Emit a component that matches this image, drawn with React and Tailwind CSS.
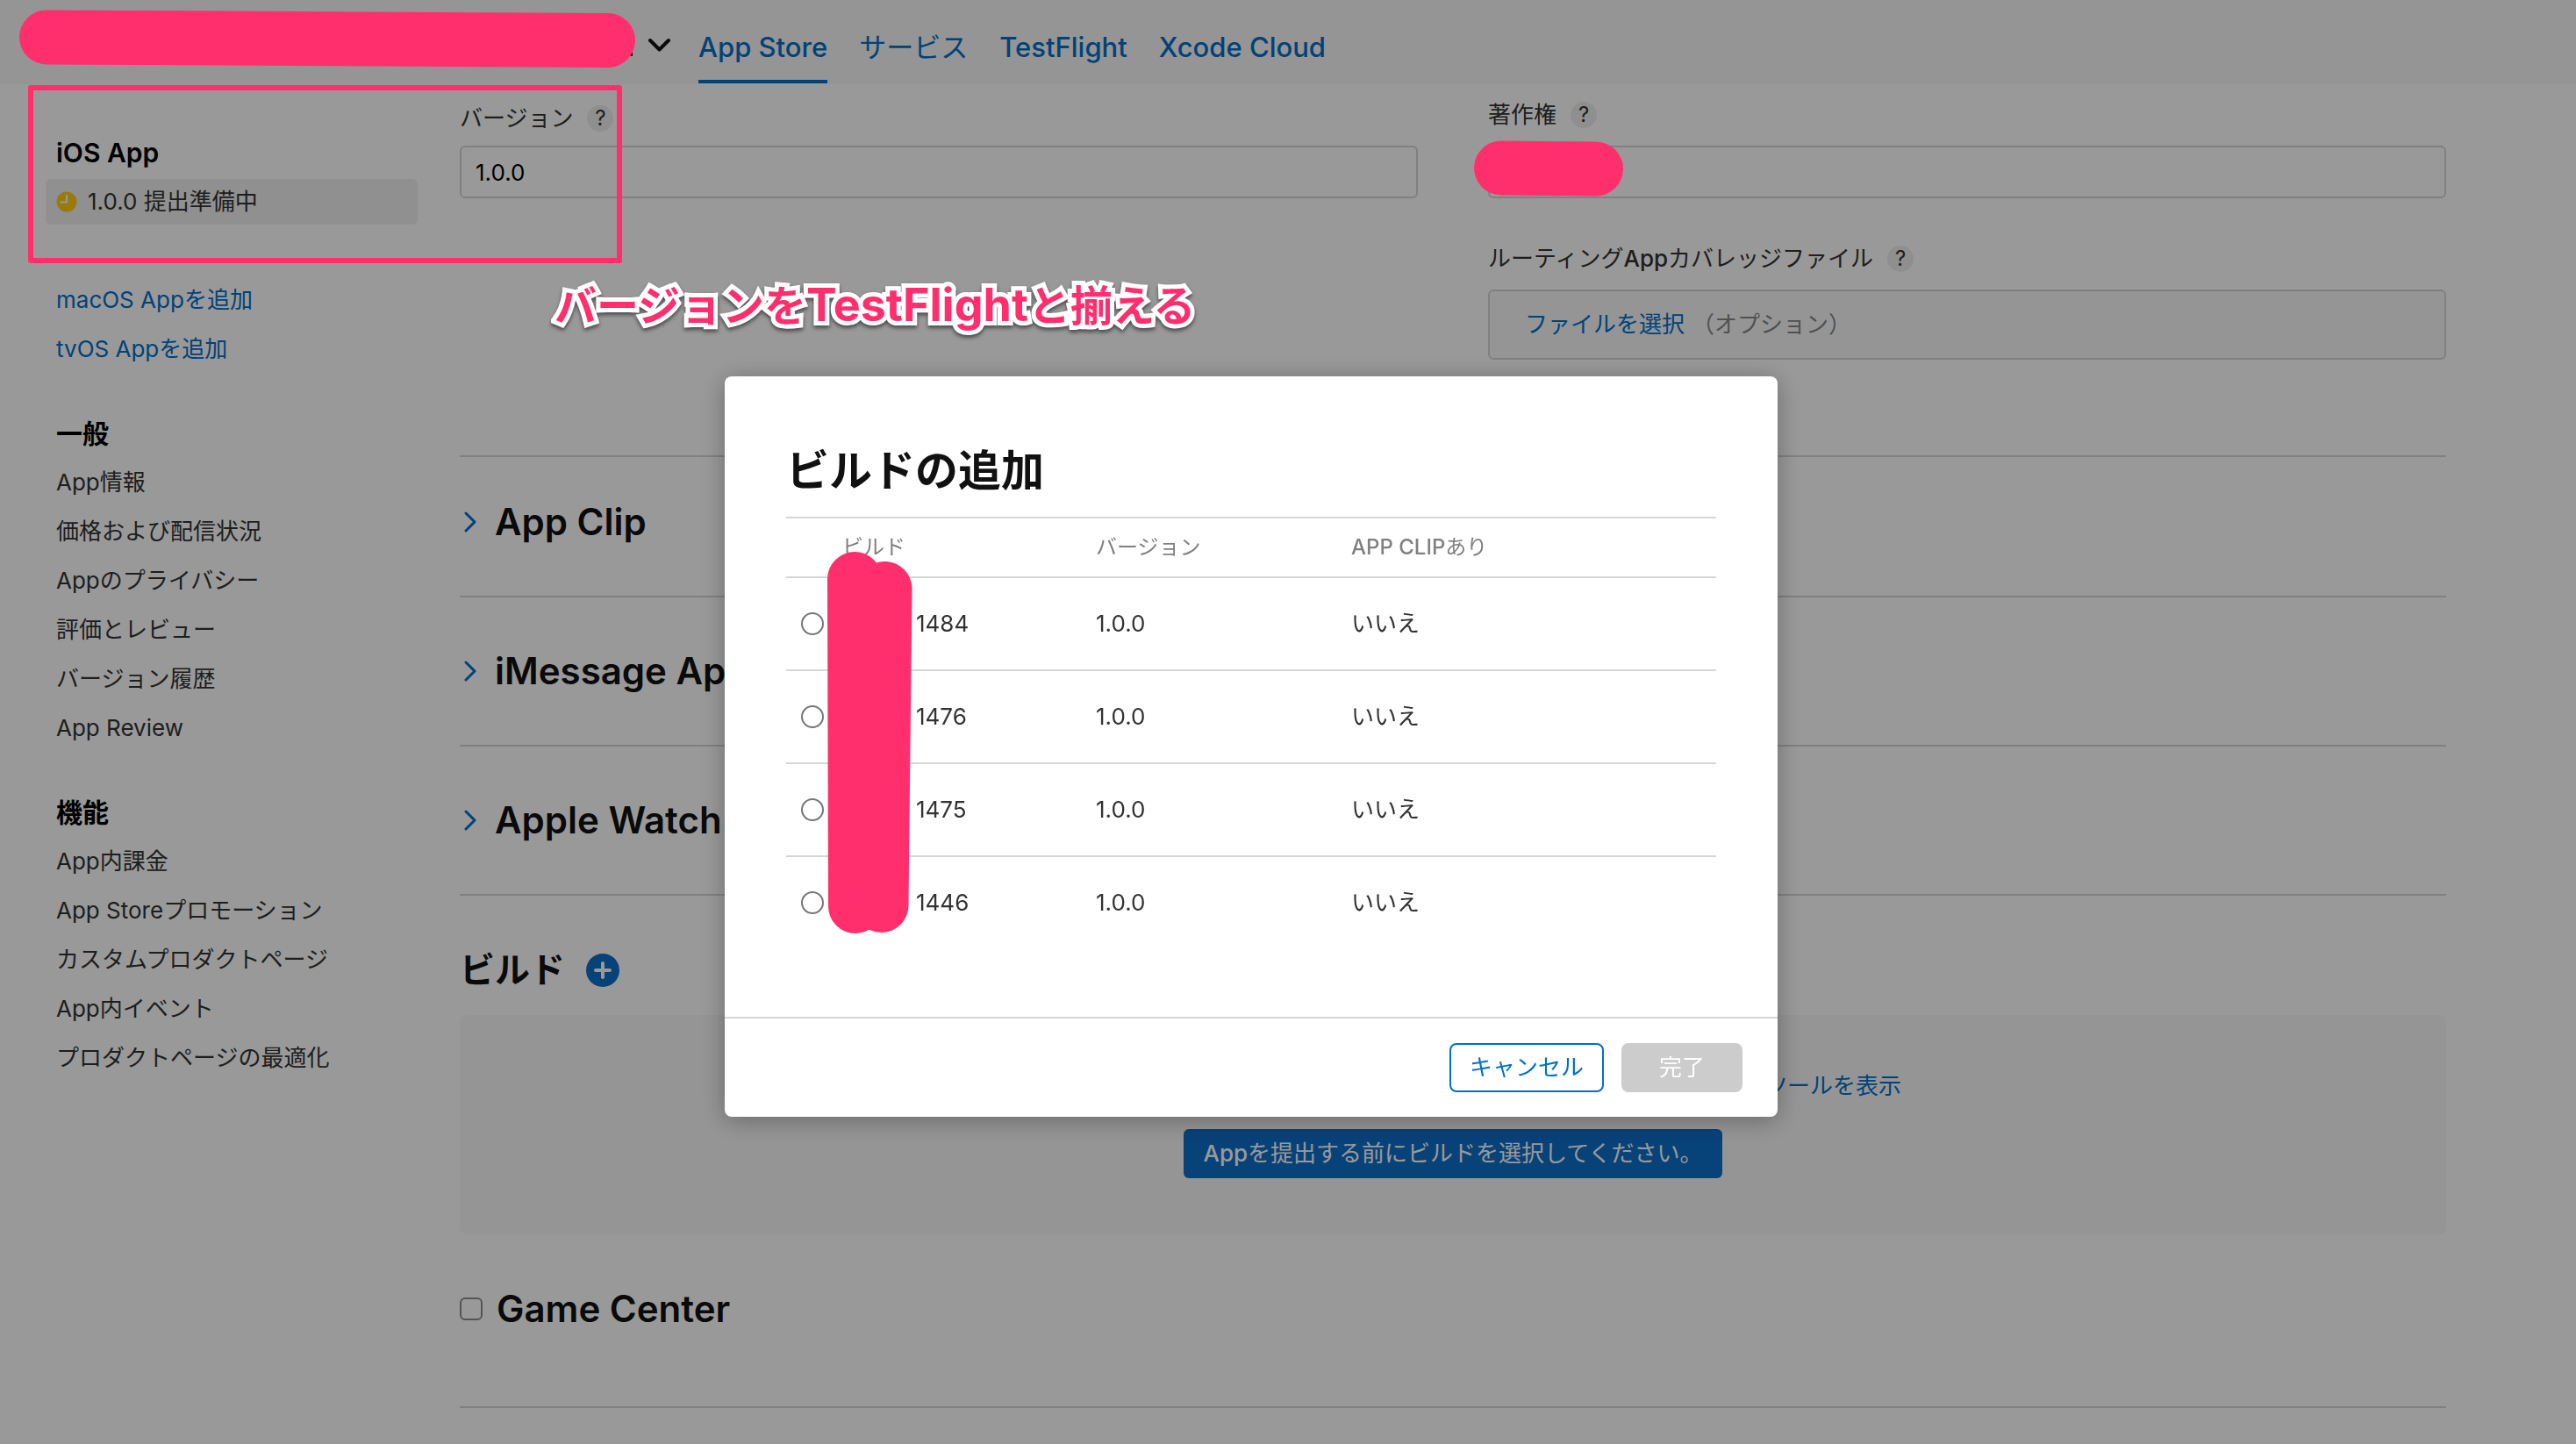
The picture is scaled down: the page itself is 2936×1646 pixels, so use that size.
import React from 'react';

const tabs = ['TestFlight', 'Xcode Cloud'];

const generalLinks = [
  'App情報',
  '価格および配信状況',
  'Appのプライバシー',
  '評価とレビュー',
  'バージョン履歴',
  'App Review',
];

const featureLinks = [
  'App内課金',
  'App Storeプロモーション',
  'カスタムプロダクトページ',
  'App内イベント',
  'プロダクトページの最適化',
];

const builds = ['1484', '1476', '1475', '1446'];

const Header = () => {
  return (
    <header className="flex h-24 bg-[#f8f8f8] pl-[736px] text-[31px] leading-10 font-medium text-[#0070c9]">
      <button type="button" aria-label="Appを切り替える" className="mr-7 pt-1">
        <svg className="h-8 w-8" viewBox="0 0 32 32" fill="none" stroke="#111" strokeWidth="4" strokeLinecap="round" strokeLinejoin="round">
          <path d="M5 12l10.500 10.500L26 12" />
        </svg>
      </button>
      <nav className="flex h-[95px] gap-9">
        <a href="#app-store" className="flex items-center border-b-4 border-[#0070c9] pt-4">
          App Store
        </a>
        <a href="#services" className="flex items-center border-b-4 border-transparent pt-4 font-normal">
          サービス
        </a>
        {tabs.map((tab) => (
          <a key={tab} href="#tab" className="flex items-center border-b-4 border-transparent pt-4">
            {tab}
          </a>
        ))}
      </nav>
    </header>
  );
};

const SideSection = ({ title, links }) => {
  return (
    <section className="mt-10">
      <h2 className="flex h-14 items-center text-[30px] font-semibold text-black">{title}</h2>
      <ul>
        {links.map((link) => (
          <li key={link} className="flex h-14 items-center">
            <a href="#section">{link}</a>
          </li>
        ))}
      </ul>
    </section>
  );
};

const Sidebar = () => {
  return (
    <aside className="w-[476px] shrink-0 pt-[50px] pl-16">
      <h2 className="flex h-14 items-center text-[30px] font-semibold text-black">iOS App</h2>
      <div className="-ml-3 flex h-14 items-center">
        <a href="#version" className="flex h-[52px] w-full items-center gap-3 rounded-md bg-[#f0f0f0] pl-3">
          <svg className="h-6 w-6" viewBox="0 0 24 24" fill="none">
            <circle cx="12" cy="12" r="11.500" fill="#ffcc16" />
            <path d="M12 5v7.500H5.500" stroke="#fff" strokeWidth="2" strokeLinecap="round" strokeLinejoin="round" />
          </svg>
          1.0.0 提出準備中
        </a>
      </div>
      <ul className="mt-14 text-[#0070c9]">
        <li className="flex h-14 items-center">
          <a href="#macos">macOS Appを追加</a>
        </li>
        <li className="flex h-14 items-center">
          <a href="#tvos">tvOS Appを追加</a>
        </li>
      </ul>
      <SideSection title="一般" links={generalLinks} />
      <SideSection title="機能" links={featureLinks} />
    </aside>
  );
};

const HelpButton = () => {
  return (
    <button type="button" aria-label="ヘルプ" className="flex h-[30px] w-[30px] items-center justify-center rounded-full bg-[#eeeeee] text-2xl">
      ?
    </button>
  );
};

const Disclosure = ({ title }) => {
  return (
    <button type="button" className="flex items-center gap-5 text-[42px] font-semibold whitespace-nowrap text-[#111111]">
      <svg className="h-6 w-5" viewBox="0 0 20 24" fill="none" stroke="#0070c9" strokeWidth="3" strokeLinecap="round" strokeLinejoin="round">
        <path d="M7 2l10 10L7 22" />
      </svg>
      {title}
    </button>
  );
};

const VersionForm = () => {
  return (
    <div className="grid grid-cols-2 gap-20">
      <div className="pt-6">
        <div className="mb-4 flex h-[30px] items-center gap-4">
          <label htmlFor="version">バージョン</label>
          <HelpButton />
        </div>
        <input
          id="version"
          type="text"
          defaultValue="1.0.0"
          className="h-15 w-full rounded-md border-2 border-[#d6d6d6] bg-white px-4 text-black"
        />
      </div>
      <div className="pt-5">
        <div className="mb-5 flex h-[30px] items-center gap-4">
          <label htmlFor="copyright">著作権</label>
          <HelpButton />
        </div>
        <input id="copyright" type="text" className="h-15 w-full rounded-md border-2 border-[#d6d6d6] bg-white px-4 text-black" />
        <div className="mt-[54px] mb-5 flex h-[30px] items-center gap-4">
          <span>
            ルーティング<span className="font-medium">App</span>カバレッジファイル
          </span>
          <HelpButton />
        </div>
        <div className="flex h-20 items-center gap-2 rounded-md border-2 border-[#d6d6d6] bg-[#f8f8f8] px-10">
          <button type="button" className="text-[#0070c9]">ファイルを選択</button>
          <span className="text-[#888888]">（オプション）</span>
        </div>
      </div>
    </div>
  );
};

const Main = () => {
  return (
    <main className="flex-1 pr-[148px] pl-12">
      <VersionForm />
      <section className="mt-[109px] flex h-40 items-center border-t-2 border-[#d6d6d6] pb-[10px]">
        <Disclosure title="App Clip" />
      </section>
      <section className="flex h-[170px] items-center border-t-2 border-[#d6d6d6]">
        <Disclosure title="iMessage App" />
      </section>
      <section className="flex h-[170px] items-center border-t-2 border-[#d6d6d6]">
        <Disclosure title="Apple Watch" />
      </section>

      <section className="border-t-2 border-[#d6d6d6] pt-16">
        <div className="flex h-[42px] items-center gap-6">
          <h2 className="text-[40px] font-semibold text-[#111111]">ビルド</h2>
          <button type="button" aria-label="ビルドを追加">
            <svg className="h-[38px] w-[38px]" viewBox="0 0 38 38" fill="none">
              <circle cx="19" cy="19" r="19" fill="#0d6ec9" />
              <path d="M19 11v16M11 19h16" stroke="#fff" strokeWidth="4" strokeLinecap="round" />
            </svg>
          </button>
        </div>
        <div className="mt-[30px] flex flex-col items-center rounded-lg bg-[#f8f8f8] py-16">
          <p className="flex h-[34px] w-[1022px] items-center justify-end">
            <a href="#tools" className="text-[#0070c9]">ツールを表示</a>
          </p>
          <button type="button" className="mt-8 h-14 rounded-md bg-[#0d6ec9] px-[22px] text-white">
            <span className="font-medium">App</span>を提出する前にビルドを選択してください。
          </button>
        </div>
      </section>

      <section className="pt-16">
        <label className="flex h-[42px] items-center gap-4 text-[42px] font-semibold text-[#111111]">
          <input type="checkbox" className="h-[26px] w-[26px] appearance-none rounded-md border-2 border-[#8c8c8c] bg-white" />
          Game Center
        </label>
        <hr className="mt-[90px] border-t-2 border-[#d6d6d6]" />
      </section>
    </main>
  );
};

const BuildDialog = () => {
  return (
    <div className="fixed inset-0 flex items-start justify-center bg-black/40 pt-[429px] pr-[84px]">
      <div
        role="dialog"
        aria-labelledby="dialog-title"
        className="w-[1200px] rounded-lg bg-white shadow-[0_4px_28px_rgba(0,0,0,0.3)]"
      >
        <div className="px-[70px] pt-20 pb-[78px]">
          <h1 id="dialog-title" className="flex h-14 items-center text-[49px] font-semibold text-[#111111]">
            ビルドの追加
          </h1>
          <table className="mt-6 w-full table-fixed border-separate border-spacing-0 text-left">
            <thead className="text-2xl text-[#808080]">
              <tr className="h-[68px]">
                <th className="w-16 border-t-2 border-[#d6d6d6]" />
                <th className="w-[289px] border-t-2 border-[#d6d6d6] font-normal">ビルド</th>
                <th className="w-[291px] border-t-2 border-[#d6d6d6] font-normal">バージョン</th>
                <th className="border-t-2 border-[#d6d6d6] font-normal">
                  <span className="font-medium">APP CLIP</span>あり
                </th>
              </tr>
            </thead>
            <tbody>
              {builds.map((build) => (
                <tr key={build} className="h-[106px]">
                  <td className="border-t-2 border-[#d6d6d6] pl-[17px]">
                    <input
                      id={`build-${build}`}
                      type="radio"
                      name="build"
                      className="block h-[26px] w-[26px] appearance-none rounded-full border-2 border-[#767676]"
                    />
                  </td>
                  <td className="border-t-2 border-[#d6d6d6] pl-[84px]">
                    <label htmlFor={`build-${build}`}>{build}</label>
                  </td>
                  <td className="border-t-2 border-[#d6d6d6]">1.0.0</td>
                  <td className="border-t-2 border-[#d6d6d6]">いいえ</td>
                </tr>
              ))}
            </tbody>
          </table>
        </div>
        <div className="flex justify-end gap-5 border-t-2 border-[#d6d6d6] px-10 py-7">
          <button type="button" className="h-14 w-[176px] rounded-lg border-2 border-[#0070c9] text-[#0070c9]">
            キャンセル
          </button>
          <button type="button" disabled className="h-14 w-[138px] rounded-lg bg-[#cccccc] text-white">
            完了
          </button>
        </div>
      </div>
    </div>
  );
};

// marker strokes, frame and note drawn over the page
const Annotations = () => {
  return (
    <div className="pointer-events-none absolute inset-0">
      <svg className="absolute top-0 left-0 h-[1100px] w-[2000px]" viewBox="0 0 2000 1100" fill="none" stroke="#ff2f6e" strokeWidth="62" strokeLinecap="round" strokeLinejoin="round">
        <rect x="717" y="60" width="4" height="4" fill="#111" stroke="none" />
        <path d="M53 42.500L693 46" />
        <path d="M1711 191.500L1819 192.500" />
        <path d="M974 660L975 1033" />
        <path d="M1008.500 671L1004.500 1032" />
        <rect x="35" y="100" width="671" height="197" strokeWidth="6" />
      </svg>
      <p className="absolute top-[318px] left-[632px] text-5xl leading-[60px] font-bold whitespace-nowrap text-[#ff2f6e] drop-shadow-[0_3px_2px_rgba(0,0,0,0.5)] [-webkit-text-stroke:10px_white] [paint-order:stroke_fill]">
        バージョンを<span className="text-[52px]">TestFlight</span>と揃える
      </p>
    </div>
  );
};

const App = () => {
  return (
    <div className="relative min-h-screen bg-white font-['Inter','Noto_Sans_CJK_JP',sans-serif] text-[26px] leading-[34px] text-[#333333]">
      <Header />
      <div className="flex">
        <Sidebar />
        <Main />
      </div>
      <BuildDialog />
      <Annotations />
    </div>
  );
};

export default App;
